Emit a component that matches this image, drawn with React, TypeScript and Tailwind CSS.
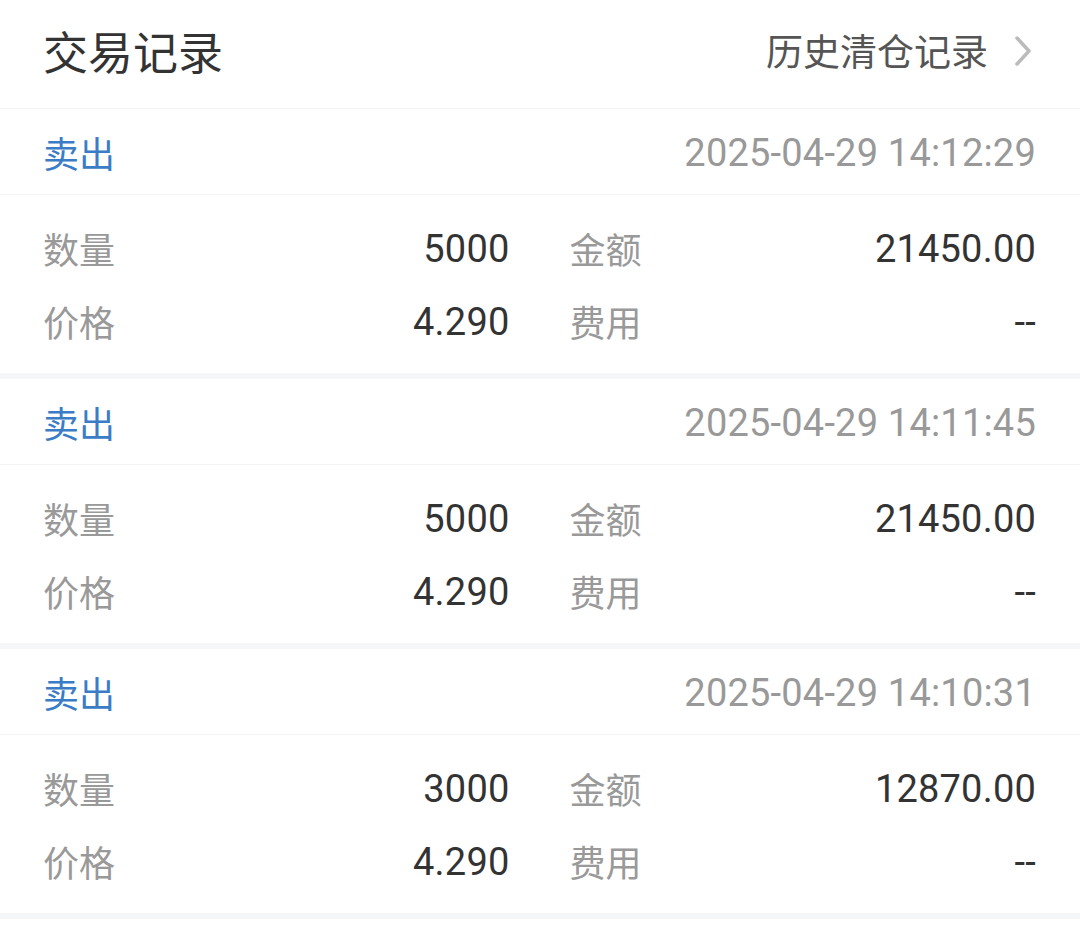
import React from "react";

type Trade = {
  time: string;
  qty: string;
  amount: string;
  price: string;
  fee: string;
};

const trades: Trade[] = [
  { time: "2025-04-29 14:12:29", qty: "5000", amount: "21450.00", price: "4.290", fee: "--" },
  { time: "2025-04-29 14:11:45", qty: "5000", amount: "21450.00", price: "4.290", fee: "--" },
  { time: "2025-04-29 14:10:31", qty: "3000", amount: "12870.00", price: "4.290", fee: "--" },
];

const cjk = "font-['Noto_Sans_CJK_SC',sans-serif]";
const num = "font-['Roboto','Noto_Sans_CJK_SC',sans-serif]";

const Field = ({ label, value }: { label: string; value: string }) => (
  <div className="flex h-[73px] items-center justify-between">
    <span className={`${cjk} text-[36px] text-[#999999]`}>{label}</span>
    <span className={`${num} translate-y-[2px] text-[38px] tracking-[0.2px] text-[#333333]`}>{value}</span>
  </div>
);

const TradeCard = ({ t }: { t: Trade }) => (
  <div className="bg-white">
    <div className="flex h-[86px] items-center justify-between border-b border-[#f2f3f4] pl-[43px] pr-[44px]">
      <span className={`${cjk} text-[36px] text-[#3a7cc6]`}>卖出</span>
      <span className={`${num} translate-y-[2px] text-[38px] tracking-[0.2px] text-[#999999]`}>{t.time}</span>
    </div>
    <div className="grid h-[178px] grid-cols-2 content-center gap-x-[60px] pl-[43px] pr-[44px]">
      <Field label="数量" value={t.qty} />
      <Field label="金额" value={t.amount} />
      <Field label="价格" value={t.price} />
      <Field label="费用" value={t.fee} />
    </div>
    <div className="h-[6px] bg-[#f5f6f7]" />
  </div>
);

const App = () => {
  return (
    <div className="min-h-screen bg-white">
      <div className="flex h-[109px] items-center justify-between border-b border-[#f2f3f4] pb-[6px] pl-[43px] pr-[48px]">
        <h1 className={`${cjk} text-[45px] font-normal text-[#333333]`}>交易记录</h1>
        <div className="flex items-center gap-[26px]">
          <span className={`${cjk} text-[37px] text-[#555555]`}>历史清仓记录</span>
          <svg width="18" height="32" viewBox="0 0 18 32" fill="none">
            <polyline points="3,3 15,16 3,29" stroke="#bbbbbb" strokeWidth="3.5" strokeLinecap="round" strokeLinejoin="round" />
          </svg>
        </div>
      </div>
      {trades.map((t, i) => (
        <TradeCard key={i} t={t} />
      ))}
    </div>
  );
};

export default App;
